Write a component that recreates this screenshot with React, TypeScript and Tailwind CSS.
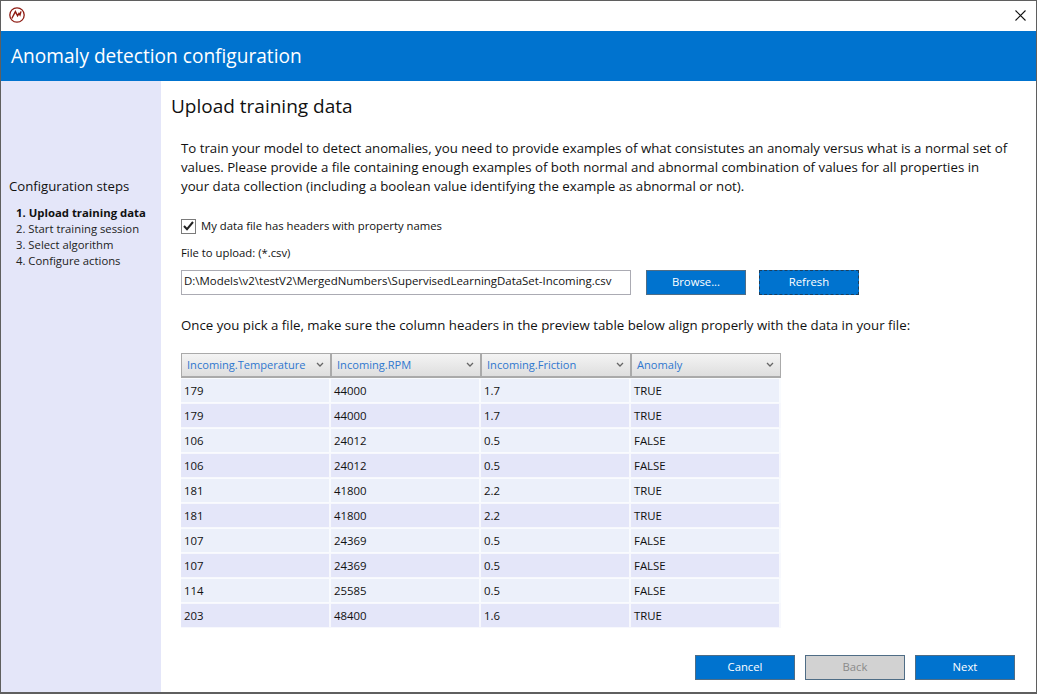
const font = { fontFamily: '"Open Sans", "Noto Sans", sans-serif' };

const columns = ["Incoming.Temperature", "Incoming.RPM", "Incoming.Friction", "Anomaly"];

const rows = [
  ["179", "44000", "1.7", "TRUE"],
  ["179", "44000", "1.7", "TRUE"],
  ["106", "24012", "0.5", "FALSE"],
  ["106", "24012", "0.5", "FALSE"],
  ["181", "41800", "2.2", "TRUE"],
  ["181", "41800", "2.2", "TRUE"],
  ["107", "24369", "0.5", "FALSE"],
  ["107", "24369", "0.5", "FALSE"],
  ["114", "25585", "0.5", "FALSE"],
  ["203", "48400", "1.6", "TRUE"],
];

const steps = ["1. Upload training data", "2. Start training session", "3. Select algorithm", "4. Configure actions"];

const Logo = () => (
  <svg width="16" height="16" viewBox="0 0 16 16" fill="none" stroke="#8f1d14">
    <circle cx="8" cy="8" r="7.2" strokeWidth="1.3" />
    <path d="M2.8 11.5 L6.4 4.6 L8.6 8.8 L10 6.4 L11 8 L12 4.4" strokeWidth="1.4" />
  </svg>
);

const Chevron = () => (
  <svg width="8" height="6" viewBox="0 0 8 6" fill="none" stroke="#666666" strokeWidth="1.3" className="shrink-0">
    <path d="M1 1 L4 4 L7 1" />
  </svg>
);

const Button = ({ label, focused, disabled }: { label: string; focused?: boolean; disabled?: boolean }) => (
  <button
    className={
      disabled
        ? "w-[100px] h-[25px] text-[11.3px] bg-[#d2d2d2] text-[#8a8a8a] border border-[#4f6d86]"
        : focused
          ? "w-[100px] h-[25px] text-[11.3px] bg-[#0073cf] text-white border border-dashed border-[#1c3f5e]"
          : "w-[100px] h-[25px] text-[11.3px] bg-[#0073cf] text-white border border-[#4f6d86]"
    }
  >
    {label}
  </button>
);

export default function App() {
  return (
    <div style={font} className="w-[1037px] h-[694px] overflow-hidden bg-[#5f5f5f] pt-px pl-px pr-px pb-[2px] text-[#111111]">
      <div className="h-full flex flex-col bg-white">
        <div className="h-[30px] shrink-0 flex items-center justify-between pl-2 pr-[10px] pb-[2px]">
          <Logo />
          <svg width="11" height="11" viewBox="0 0 11 11" stroke="#111111" strokeWidth="1.1">
            <path d="M0.5 0.5 L10.5 10.5 M10.5 0.5 L0.5 10.5" />
          </svg>
        </div>
        <div className="h-[50px] shrink-0 bg-[#0073cf] flex items-center pl-[10px] text-white text-[19.1px]">
          Anomaly detection configuration
        </div>
        <div className="flex-1 flex min-h-0">
          <aside className="w-[160px] shrink-0 bg-[#e4e6f9] pt-[96px] pl-2">
            <div className="text-[13.2px] leading-[18px]">Configuration steps</div>
            <ul className="mt-[10px] pl-[7px] text-[11.3px] leading-[16px] text-[#222222]">
              {steps.map((step, i) => (
                <li key={step} className={i === 0 ? "font-bold text-[#111111] whitespace-nowrap text-[11.35px]" : "whitespace-nowrap"}>
                  {step}
                </li>
              ))}
            </ul>
          </aside>
          <main className="flex-1 flex flex-col pl-[10px] pr-[21px]">
            <h1 className="mt-[12px] text-[19px] leading-[26px]">Upload training data</h1>
            <div className="pl-[10px] flex flex-col flex-1">
              <p className="mt-[20px] text-[13.25px] leading-[19px] w-[828px]">
                To train your model to detect anomalies, you need to provide examples of what consistutes an anomaly versus what is a normal set of values. Please provide a file containing enough examples of both normal and abnormal combination of values for all properties in your data collection (including a boolean value identifying the example as abnormal or not).
              </p>
              <label className="mt-[22px] flex items-center gap-[5px] text-[11.3px] leading-[16px]">
                <span className="w-[15px] h-[15px] border border-[#7a7a7a] flex items-center justify-center">
                  <svg width="11" height="10" viewBox="0 0 11 10" fill="none" stroke="#222222" strokeWidth="2">
                    <path d="M1 5 L4 8.2 L10 1" />
                  </svg>
                </span>
                My data file has headers with property names
              </label>
              <div className="mt-[11px] text-[11.3px] leading-[16px]">File to upload: (*.csv)</div>
              <div className="mt-[9px] flex items-center">
                <div className="w-[450px] h-[25px] border border-[#ababb3] pl-[2px] text-[11.45px] leading-[19px] whitespace-nowrap">
                  D:\Models\v2\testV2\MergedNumbers\SupervisedLearningDataSet-Incoming.csv
                </div>
                <div className="ml-[15px] flex gap-[13px]">
                  <Button label="Browse..." />
                  <Button label="Refresh" focused />
                </div>
              </div>
              <p className="mt-[21px] text-[13.25px] leading-[19px] whitespace-nowrap">
                Once you pick a file, make sure the column headers in the preview table below align properly with the data in your file:
              </p>
              <div className="mt-[18px] w-[600px] text-[11.4px]">
                <div className="flex h-[25px] border-t border-b-2 border-[#aaaaaa]">
                  {columns.map((column) => (
                    <div
                      key={column}
                      className="w-[150px] flex items-center justify-between pl-[5px] pr-[6px] bg-gradient-to-b from-[#f4f4f4] to-[#dedede] border-x border-[#aaaaaa] text-[#2f77cf] text-[11.1px] whitespace-nowrap"
                    >
                      {column}
                      <Chevron />
                    </div>
                  ))}
                </div>
                {rows.map((row, i) => (
                  <div key={i} className={i % 2 === 0 ? "flex h-[25px] bg-[#ecf0fa]" : "flex h-[25px] bg-[#e4e6f9]"}>
                    {row.map((cell, j) => (
                      <div key={j} className="w-[150px] pl-[3px] flex items-center border-r-2 border-y border-white/70 text-[#111111]">
                        {cell}
                      </div>
                    ))}
                  </div>
                ))}
              </div>
              <div className="mt-[27px] flex justify-end gap-[10px]">
                <Button label="Cancel" />
                <Button label="Back" disabled />
                <Button label="Next" />
              </div>
            </div>
          </main>
        </div>
      </div>
    </div>
  );
}
